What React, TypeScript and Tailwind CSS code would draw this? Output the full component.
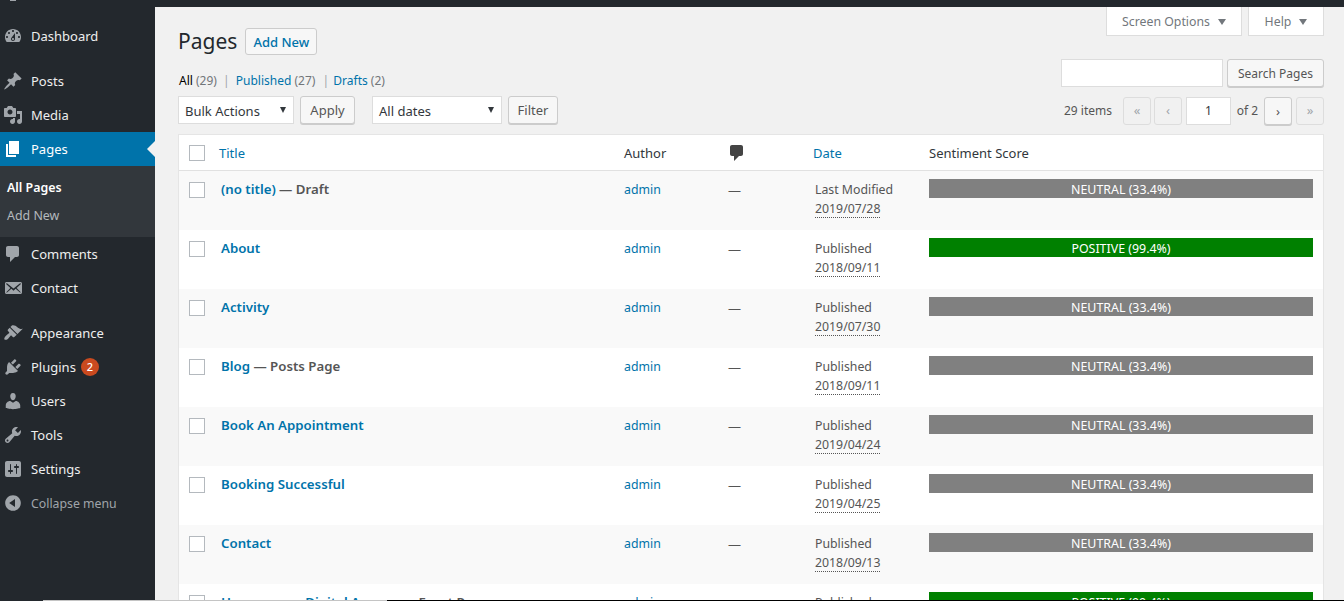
import { ReactNode } from 'react';

const icons: Record<string, string> = {
  dashboard:
    'M3.76 16h12.48c1.1-1.37 1.76-3.11 1.76-5 0-4.42-3.58-8-8-8s-8 3.58-8 8c0 1.89.66 3.63 1.76 5zM10 4c.55 0 1 .45 1 1s-.45 1-1 1-1-.45-1-1 .45-1 1-1zM6 6c.55 0 1 .45 1 1s-.45 1-1 1-1-.45-1-1 .45-1 1-1zm8 0c.55 0 1 .45 1 1s-.45 1-1 1-1-.45-1-1 .45-1 1-1zm-5.37 5.55L12 7v6c0 1.1-.9 2-2 2s-2-.9-2-2c0-.57.24-1.08.63-1.45zM4 10c.55 0 1 .45 1 1s-.45 1-1 1-1-.45-1-1 .45-1 1-1zm12 0c.55 0 1 .45 1 1s-.45 1-1 1-1-.45-1-1 .45-1 1-1zm-5 3c0-.55-.45-1-1-1s-1 .45-1 1 .45 1 1 1 1-.45 1-1z',
  post:
    'M10.44 3.02l1.82-1.82 6.36 6.35-1.83 1.82c-1.05-.68-2.48-.57-3.41.36l-.75.75c-.92.93-1.04 2.35-.35 3.41l-1.83 1.82-2.41-2.41-2.8 2.79c-.42.42-3.38 2.71-3.8 2.29s1.86-3.39 2.28-3.81l2.79-2.79L4.1 9.36l1.83-1.82c1.05.69 2.48.57 3.4-.36l.75-.75c.93-.92 1.05-2.35.36-3.41z',
  media:
    'M13 11V4c0-.55-.45-1-1-1h-1.67L9 1H5L3.67 3H2c-.55 0-1 .45-1 1v7c0 .55.45 1 1 1h10c.55 0 1-.45 1-1zM7 4.5c1.38 0 2.5 1.12 2.5 2.5S8.38 9.5 7 9.5 4.5 8.38 4.5 7 5.62 4.5 7 4.5zM14 6h5v10.5c0 1.38-1.12 2.5-2.5 2.5S14 17.88 14 16.5s1.12-2.5 2.5-2.5c.17 0 .34.02.5.05V9h-3V6zm-4 8.05V13h2v3.5c0 1.38-1.12 2.5-2.5 2.5S7 17.88 7 16.5 8.12 14 9.5 14c.17 0 .34.02.5.05z',
  page: 'M6 15V2h10v13H6zm-1 1h8v2H3V5h2v11z',
  comments:
    'M5 2h9c1.1 0 2 .9 2 2v7c0 1.1-.9 2-2 2h-2l-5 5v-5H5c-1.1 0-2-.9-2-2V4c0-1.1.9-2 2-2z',
  email:
    'M19 14.5v-9c0-.83-.67-1.5-1.5-1.5H3.49c-.83 0-1.5.67-1.5 1.5v9c0 .83.67 1.5 1.5 1.5H17.5c.83 0 1.5-.67 1.5-1.5zm-1.31-9.11c.33.33.15.67-.03.84L13.6 9.95l3.9 4.06c.12.14.2.36.06.51-.13.16-.43.15-.56.05l-4.37-3.73-2.14 1.95-2.13-1.95-4.37 3.73c-.13.1-.43.11-.56-.05-.14-.15-.06-.37.06-.51l3.9-4.06-4.06-3.72c-.18-.17-.36-.51-.03-.84s.67-.17.95.07l6.24 5.04 6.25-5.04c.28-.24.62-.4.95-.07z',
  appearance:
    'M14.48 11.06L7.41 3.99l1.5-1.5c.5-.56 2.3-.47 3.51.32 1.21.8 1.43 1.28 2.91 2.1 1.18.64 2.45 1.26 4.45.85zm-.71.71L6.7 4.7 4.93 6.47c-.39.39-.39 1.02 0 1.41l1.06 1.06c.39.39.39 1.03 0 1.42-.6.6-1.43 1.11-2.21 1.69-.35.26-.7.53-1.01.84-1.34 1.34-1.81 2.75-1.27 3.53.55.78 2.01.48 3.36-.52.31-.23.58-.5.84-.81.58-.78 1.09-1.61 1.69-2.21.39-.39 1.03-.39 1.42 0l1.06 1.06c.39.39 1.02.39 1.41 0z',
  plugins:
    'M13.11 4.36L9.87 7.6 8 5.73l3.24-3.24c.35-.34 1.05-.2 1.56.32.52.51.66 1.21.31 1.55zm-8 1.77l.91-1.12 9.01 9.01-1.19.84c-.71.71-2.63 1.16-3.82 1.16H6.14L4.9 17.26c-.59.59-1.54.59-2.12 0-.59-.58-.59-1.53 0-2.12l1.24-1.24v-3.88c0-1.13.4-3.19 1.09-3.89zm7.26 3.97l3.24-3.24c.34-.35 1.04-.21 1.55.31.52.51.66 1.21.31 1.55l-3.24 3.25z',
  users:
    'M10 9.25c-2.27 0-2.73-3.44-2.73-3.44C7 4.02 7.82 2 9.97 2c2.16 0 2.98 2.02 2.71 3.81 0 0-.41 3.44-2.68 3.44zm0 2.57L12.72 10c2.39 0 4.52 2.33 4.52 4.53v2.49s-3.65 1.13-7.24 1.13c-3.65 0-7.24-1.13-7.24-1.13v-2.49c0-2.25 1.94-4.48 4.47-4.48z',
  tools:
    'M16.68 9.77c-1.34 1.34-3.3 1.67-4.95.99l-5.41 6.52c-.99.99-2.59.99-3.58 0s-.99-2.59 0-3.57l6.52-5.42c-.68-1.65-.35-3.61.99-4.95 1.28-1.28 3.12-1.62 4.72-1.06l-2.89 2.89 2.82 2.82 2.86-2.87c.53 1.58.18 3.39-1.08 4.65zM3.81 16.21c.4.39 1.04.39 1.43 0 .4-.4.4-1.04 0-1.43-.39-.4-1.03-.4-1.43 0-.39.39-.39 1.03 0 1.43z',
  settings:
    'M18 16V4c0-1.1-.9-2-2-2H4c-1.1 0-2 .9-2 2v12c0 1.1.9 2 2 2h12c1.1 0 2-.9 2-2zM8 11h1c.55 0 1 .45 1 1s-.45 1-1 1H8v1.5c0 .28-.22.5-.5.5s-.5-.22-.5-.5V13H6c-.55 0-1-.45-1-1s.45-1 1-1h1V5.5c0-.28.22-.5.5-.5s.5.22.5.5V11zm5-2h-1c-.55 0-1-.45-1-1s.45-1 1-1h1V5.5c0-.28.22-.5.5-.5s.5.22.5.5V7h1c.55 0 1 .45 1 1s-.45 1-1 1h-1v5.5c0 .28-.22.5-.5.5s-.5-.22-.5-.5V9z',
  collapse:
    'M10 2.16c4.33 0 7.84 3.51 7.84 7.84s-3.51 7.84-7.84 7.84S2.16 14.33 2.16 10 5.71 2.16 10 2.16zm2 11.72V6.12L6.18 9.97z',
};

function Dashicon({ name, className }: { name: string; className: string }) {
  return (
    <svg viewBox="0 0 20 20" className={className} fill="currentColor">
      <path fillRule="evenodd" d={icons[name]} />
    </svg>
  );
}

function MenuItem({ icon, label, active, badge }: { icon: string; label: string; active?: boolean; badge?: string }) {
  return (
    <div className={`relative flex h-[34px] items-center ${active ? 'bg-[#0073aa] text-white' : 'text-[#eeeeee]'}`}>
      <Dashicon name={icon} className={`ml-[3px] h-5 w-5 shrink-0 ${active ? 'text-white' : 'text-[#a0a5aa]'}`} />
      <span className="ml-2 pt-[2px] text-[13px]">{label}</span>
      {badge && (
        <span className="ml-[5px] flex h-[18px] w-[18px] items-center justify-center rounded-full bg-[#ca4a1f] text-[11px] font-medium text-white">
          {badge}
        </span>
      )}
      {active && (
        <span className="absolute right-0 top-[9px] h-0 w-0 border-y-8 border-r-8 border-y-transparent border-r-[#f1f1f1]" />
      )}
    </div>
  );
}

function Sidebar() {
  return (
    <aside className="w-[155px] shrink-0 bg-[#23282d]">
      <div className="flex h-[19px] items-start pl-[10px]">
        <span className="h-px w-[6px] bg-[#a0a5aa]" />
      </div>
      <MenuItem icon="dashboard" label="Dashboard" />
      <div className="h-[11px]" />
      <MenuItem icon="post" label="Posts" />
      <MenuItem icon="media" label="Media" />
      <MenuItem icon="page" label="Pages" active />
      <div className="flex h-[71px] flex-col gap-2 bg-[#32373c] pl-[7px] pt-3 text-[12.4px] leading-5">
        <span className="font-semibold text-white">All Pages</span>
        <span className="text-[#b4b9be]">Add New</span>
      </div>
      <MenuItem icon="comments" label="Comments" />
      <MenuItem icon="email" label="Contact" />
      <div className="h-[11px]" />
      <MenuItem icon="appearance" label="Appearance" />
      <MenuItem icon="plugins" label="Plugins" badge="2" />
      <MenuItem icon="users" label="Users" />
      <MenuItem icon="tools" label="Tools" />
      <MenuItem icon="settings" label="Settings" />
      <div className="flex h-[34px] items-center text-[#a0a5aa]">
        <Dashicon name="collapse" className="ml-[3px] h-5 w-5" />
        <span className="ml-2 pt-[2px] text-[12.3px]">Collapse menu</span>
      </div>
    </aside>
  );
}

function Btn({ children, className = '' }: { children: ReactNode; className?: string }) {
  return (
    <span
      className={`flex h-7 items-center justify-center rounded-[3px] border border-[#cccccc] bg-[#f7f7f7] pt-[2px] text-[13px] text-[#555555] shadow-[0_1px_0_#cccccc] ${className}`}
    >
      {children}
    </span>
  );
}

function Select({ label, className }: { label: string; className: string }) {
  return (
    <span
      className={`flex h-7 items-center justify-between border border-[#dddddd] bg-white pl-[6px] pr-[7px] text-[13px] text-[#32373c] ${className}`}
    >
      <span className="pt-[3px]">{label}</span>
      <span className="h-0 w-0 border-x-[3.5px] border-t-[6px] border-x-transparent border-t-[#32373c]" />
    </span>
  );
}

function PageBtn({ children, on }: { children: string; on?: boolean }) {
  return on ? (
    <Btn className="w-7">{children}</Btn>
  ) : (
    <span className="flex h-7 w-7 items-center justify-center rounded-[3px] border border-[#dddddd] bg-[#f1f1f1] text-[13px] text-[#a0a5aa]">
      {children}
    </span>
  );
}

function Tab({ label, className }: { label: string; className: string }) {
  return (
    <span
      className={`flex h-[29px] items-center justify-center gap-2 border-x border-b border-[#dddddd] bg-white pt-[2px] text-[12.3px] text-[#72777c] ${className}`}
    >
      {label}
      <span className="h-0 w-0 border-x-[4px] border-t-[6px] border-x-transparent border-t-[#72777c]" />
    </span>
  );
}

type Row = { title: string; state?: string; dateLabel: string; date: string; positive?: boolean };

const rows: Row[] = [
  { title: '(no title)', state: 'Draft', dateLabel: 'Last Modified', date: '2019/07/28' },
  { title: 'About', dateLabel: 'Published', date: '2018/09/11', positive: true },
  { title: 'Activity', dateLabel: 'Published', date: '2019/07/30' },
  { title: 'Blog', state: 'Posts Page', dateLabel: 'Published', date: '2018/09/11' },
  { title: 'Book An Appointment', dateLabel: 'Published', date: '2019/04/24' },
  { title: 'Booking Successful', dateLabel: 'Published', date: '2019/04/25' },
  { title: 'Contact', dateLabel: 'Published', date: '2018/09/13' },
  { title: 'Homepage – Digital Agency', state: 'Front Page', dateLabel: 'Published', date: '2018/09/11', positive: true },
];

const gridCols = 'grid-cols-[40px_405px_106px_83px_116px_1fr]';

function Checkbox() {
  return <span className="block h-4 w-4 border border-[#b4b9be] bg-white" />;
}

function TableRow({ row, odd }: { row: Row; odd: boolean }) {
  return (
    <div className={`grid h-[59px] ${gridCols} pr-[10px] pt-2 text-[12.3px] leading-5 ${odd ? 'bg-[#f9f9f9]' : 'bg-white'}`}>
      <div className="pl-[10px] pt-[3px]">
        <Checkbox />
      </div>
      <div className="pl-[2px] text-[13.25px] font-semibold text-[#555555]">
        <span className="text-[#0073aa]">{row.title}</span>
        {row.state && ` — ${row.state}`}
      </div>
      <div className="pt-px text-[#0073aa]">admin</div>
      <div className="ml-[-2px] pt-px text-[13px] text-[#555555]">—</div>
      <div className="pl-[2px] pt-px text-[#555555]">
        <div className="mb-[-1px]">{row.dateLabel}</div>
        <span className="border-b border-dotted border-[#555555] leading-[18px]">{row.date}</span>
      </div>
      <div
        className={`flex h-[19px] items-center justify-center pt-[2px] text-[12.4px] text-white ${row.positive ? 'bg-[#008000]' : 'bg-[#808080]'}`}
      >
        {row.positive ? 'POSITIVE (99.4%)' : 'NEUTRAL (33.4%)'}
      </div>
    </div>
  );
}

export default function App() {
  return (
    <div className="relative flex h-[601px] w-[1344px] overflow-hidden bg-[#f1f1f1] font-['Noto_Sans','Open_Sans',sans-serif]">
      <Sidebar />
      <main className="flex min-w-0 flex-1 flex-col">
        <div className="h-[7px] shrink-0 bg-[#23282d]" />
        <div className="flex justify-end gap-[6px] pr-5">
          <Tab label="Screen Options" className="w-[136px]" />
          <Tab label="Help" className="w-[76px]" />
        </div>
        <div className="flex flex-col pl-[23px] pr-5">
          <div className="mt-[-9px] flex items-center gap-[8px]">
            <h1 className="text-[21px] leading-[29px] text-[#23282d]">Pages</h1>
            <Btn className="h-[27px] w-[72px] font-medium !text-[#0073aa] !shadow-none">Add New</Btn>
          </div>
          <div className="relative mt-[15px] flex h-5 items-center justify-between text-xs">
            <p className="pl-px text-[#72767a]">
              <span className="text-black">All</span> (29) <span className="mx-[3px] text-[#a0a5aa]">|</span>{' '}
              <span className="text-[#0073aa]">Published</span> (27){' '}
              <span className="ml-1 mr-px text-[#a0a5aa]">|</span> <span className="text-[#0073aa]">Drafts</span> (2)
            </p>
            <div className="absolute right-0 top-[-12px] flex gap-1">
              <span className="h-[28px] w-[162px] border border-[#dddddd] bg-white" />
              <Btn className="w-[97px] !text-xs">Search Pages</Btn>
            </div>
          </div>
          <div className="mt-[5px] flex h-[28px] items-center">
            <Select label="Bulk Actions" className="w-[116px]" />
            <Btn className="ml-[6px] w-[55px]">Apply</Btn>
            <Select label="All dates" className="ml-[17px] w-[130px]" />
            <Btn className="ml-[6px] w-[50px]">Filter</Btn>
            <div className="ml-auto flex items-center pt-px text-xs text-[#555555]">
              <span className="mr-[11px]">29 items</span>
              <div className="flex items-center gap-[3px]">
                <PageBtn>«</PageBtn>
                <PageBtn>‹</PageBtn>
              </div>
              <span className="ml-1 flex h-[28px] w-[45px] items-center justify-center border border-[#dddddd] bg-white text-[#32373c]">
                1
              </span>
              <span className="w-[33px] text-center">of 2</span>
              <PageBtn on>›</PageBtn>
              <span className="ml-1">
                <PageBtn>»</PageBtn>
              </span>
            </div>
          </div>
          <section className="mt-[10px] border border-[#e5e5e5] bg-white">
            <div className={`grid h-[36px] ${gridCols} items-center border-b border-[#e1e1e1] pr-[10px] text-[13px] text-[#32373c]`}>
              <div className="pl-[10px]">
                <Checkbox />
              </div>
              <div className="pt-[2px] text-[#0073aa]">Title</div>
              <div className="pt-[2px]">Author</div>
              <div>
                <Dashicon name="comments" className="ml-[-3px] h-5 w-5 text-[#444444]" />
              </div>
              <div className="pt-[2px] text-[#0073aa]">Date</div>
              <div className="pt-[2px]">Sentiment Score</div>
            </div>
            {rows.map((row, i) => (
              <TableRow key={row.title} row={row} odd={i % 2 === 0} />
            ))}
          </section>
        </div>
      </main>
      <div className="absolute inset-x-0 bottom-0 flex h-px">
        <span className="w-[43px] bg-[#23282d]" />
        <span className="w-[344px] bg-[#c4c4c4]" />
        <span className="flex-1 bg-black" />
      </div>
    </div>
  );
}
